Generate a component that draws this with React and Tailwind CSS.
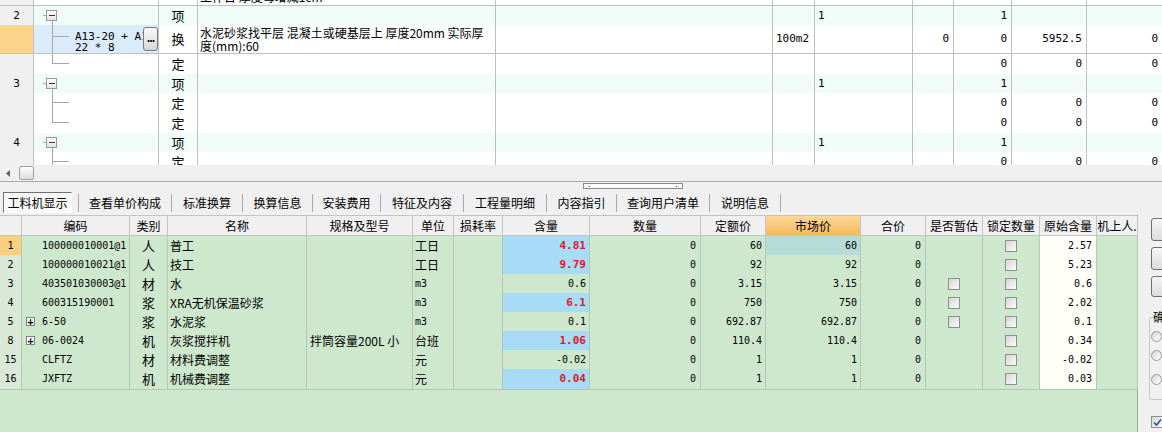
import React from 'react';

const TOP_COLS = 'grid grid-cols-[34px_125px_39px_298px_277px_42px_98px_41px_58px_75px_75px]';
const BOT_COLS = 'grid grid-cols-[22px_108px_38px_139px_106px_41px_49px_87px_111px_65px_95px_65px_57px_57px_57px_41px]';
const MONO = "font-['DejaVu_Sans_Mono',monospace]";

const topRows = [
  { h: 'h-[20px]', partial: true, desc: '工作日 厚度每增减1cm', vals: ['', '', '', '', '', ''] },
  { h: 'h-[19px]', num: '2', item: true, type: '项', tree: 'box', vals: ['', '1', '', '1', '', ''] },
  { h: 'h-[29px]', swap: true, type: '换', tree: 'mid', branch: 'top-[11px]', vals: ['100m2', '', '0', '0', '5952.5', '0'] },
  { h: 'h-[20px]', type: '定', tree: 'last', branch: 'top-[9px]', vals: ['', '', '', '0', '0', '0'] },
  { h: 'h-[19px]', num: '3', item: true, type: '项', tree: 'box', vals: ['', '1', '', '1', '', ''] },
  { h: 'h-[20px]', type: '定', tree: 'mid', branch: 'top-[9px]', vals: ['', '', '', '0', '0', '0'] },
  { h: 'h-[20px]', type: '定', tree: 'last', branch: 'top-[9px]', vals: ['', '', '', '0', '0', '0'] },
  { h: 'h-[19px]', num: '4', item: true, type: '项', tree: 'box', vals: ['', '1', '', '1', '', ''] },
  { h: 'h-[20px]', type: '定', tree: 'mid', branch: 'top-[9px]', vals: ['', '', '', '0', '0', '0'] },
];

const rows = [
  { n: '1', code: '100000010001@1', cat: '人', name: '普工', unit: '工日', qty: '4.81', hl: true, price: '60', orig: '2.57', sel: true },
  { n: '2', code: '100000010021@1', cat: '人', name: '技工', unit: '工日', qty: '9.79', hl: true, price: '92', orig: '5.23' },
  { n: '3', code: '403501030003@1', cat: '材', name: '水', unit: 'm3', qty: '0.6', price: '3.15', est: true, orig: '0.6' },
  { n: '4', code: '600315190001', cat: '浆', name: 'XRA无机保温砂浆', unit: 'm3', qty: '6.1', hl: true, price: '750', est: true, orig: '2.02' },
  { n: '5', code: '6-50', plus: true, cat: '浆', name: '水泥浆', unit: 'm3', qty: '0.1', price: '692.87', est: true, orig: '0.1' },
  { n: '8', code: '06-0024', plus: true, cat: '机', name: '灰浆搅拌机', spec: '拌筒容量200L 小', unit: '台班', qty: '1.06', hl: true, price: '110.4', orig: '0.34' },
  { n: '15', code: 'CLFTZ', cat: '材', name: '材料费调整', unit: '元', qty: '-0.02', price: '1', orig: '-0.02' },
  { n: '16', code: 'JXFTZ', cat: '机', name: '机械费调整', unit: '元', qty: '0.04', hl: true, price: '1', orig: '0.03' },
];

const tabs = [
  { t: '查看单价构成', w: 'w-[92px]' },
  { t: '标准换算', w: 'w-[70px]' },
  { t: '换算信息', w: 'w-[69px]' },
  { t: '安装费用', w: 'w-[67px]' },
  { t: '特征及内容', w: 'w-[82px]' },
  { t: '工程量明细', w: 'w-[82px]' },
  { t: '内容指引', w: 'w-[69px]' },
  { t: '查询用户清单', w: 'w-[92px]' },
  { t: '说明信息', w: 'w-[70px]' },
];

const headers = ['', '编码', '类别', '名称', '规格及型号', '单位', '损耗率', '含量', '数量', '定额价', '市场价', '合价', '是否暂估', '锁定数量', '原始含量', '机上人.'];

function CheckBox({ checked }) {
  return (
    <span className="flex items-center justify-center w-[12px] h-[12px] border border-[#8e8f8f] bg-linear-to-br from-[#d6d6d6] to-[#fbfbfb]">
      {checked && (
        <svg width="9" height="9" viewBox="0 0 9 9">
          <path d="M1 4.5 L3.5 7 L8 1.5" fill="none" stroke="#2a4fa8" strokeWidth="1.6" />
        </svg>
      )}
    </span>
  );
}

function TreeCell({ row }) {
  const bg = row.swap ? 'bg-[#dcebfc]' : row.item ? 'bg-[#effcf7]' : 'bg-white';
  return (
    <div className={`relative border-r border-b border-[#c0c0c0] ${bg}`}>
      {row.tree === 'box' && (
        <>
          <span className="absolute left-[9px] top-[9px] w-[3px] h-px bg-[#a8a8a8]" />
          <span className="absolute left-[12px] top-[4px] w-[11px] h-[11px] border border-[#9a9a9a] bg-linear-to-b from-white to-[#e4e4e4] flex items-center justify-center">
            <span className="w-[6px] h-px bg-[#333]" />
          </span>
          <span className="absolute left-[18px] top-[15px] bottom-0 w-px bg-[#a8a8a8]" />
        </>
      )}
      {row.tree === 'mid' && (
        <>
          <span className="absolute left-[18px] top-0 bottom-0 w-px bg-[#a8a8a8]" />
          <span className={`absolute left-[18px] w-[17px] h-px bg-[#a8a8a8] ${row.branch}`} />
        </>
      )}
      {row.tree === 'last' && (
        <>
          <span className="absolute left-[18px] top-0 h-[9px] w-px bg-[#a8a8a8]" />
          <span className={`absolute left-[18px] w-[17px] h-px bg-[#a8a8a8] ${row.branch}`} />
        </>
      )}
      {row.swap && (
        <>
          <div className={`${MONO} text-[11px] leading-[11px] pl-[41px] pr-[17px] pt-[6px] whitespace-nowrap overflow-hidden`}>
            <div>A13-20 + A13-</div>
            <div>22 * 8</div>
          </div>
          <div className="absolute left-[109px] top-[2px] w-[15px] h-[24px] rounded-[3px] border border-[#7a7a7a] bg-linear-to-b from-[#fafafa] to-[#d6d6d6] flex items-start justify-center">
            <span className="text-[11px] leading-[12px] font-bold tracking-[-1px] mt-[3px]">...</span>
          </div>
        </>
      )}
    </div>
  );
}

function TopRow({ row }) {
  const rowBg = row.item ? 'bg-[#effcf7]' : 'bg-white';
  const gutter = row.swap ? 'bg-[#fed48c]' : 'bg-[#f0f0f0]';
  return (
    <div className={`${TOP_COLS} ${row.h}`}>
      <div className={`border-r border-b border-[#c0c0c0] ${gutter} flex items-center justify-center ${MONO} text-[11px]`}>{row.num}</div>
      <TreeCell row={row} />
      <div className={`border-r border-b border-[#c0c0c0] ${rowBg} flex items-center justify-center text-[13px]`}>{row.type}</div>
      <div className={`border-r border-b border-[#c0c0c0] ${rowBg} pl-[2px] overflow-hidden leading-[13px] ${row.partial ? 'flex items-end pb-[2px]' : 'pt-[1px]'}`}>
        {row.partial && <span>{row.desc}</span>}
        {row.swap && (
          <>
            <div className="whitespace-nowrap">水泥砂浆找平层 混凝土或硬基层上 厚度20mm 实际厚</div>
            <div className="whitespace-nowrap">度(mm):60</div>
          </>
        )}
      </div>
      <div className={`border-r border-b border-[#c0c0c0] ${rowBg}`} />
      {row.vals.map((v, i) => (
        <div
          key={i}
          className={`border-r border-b border-[#c0c0c0] ${rowBg} flex items-center ${MONO} text-[11px] whitespace-nowrap ${i < 2 ? 'justify-start pl-[3px]' : 'justify-end pr-[4px]'} ${i === 5 ? 'border-r-0' : ''}`}
        >
          {v}
        </div>
      ))}
    </div>
  );
}

function BottomRow({ r }) {
  const cell = 'border-r border-b border-[#b3c5b3] flex items-center';
  return (
    <div className={`${BOT_COLS} h-[19px] bg-[#cde8cd]`}>
      <div className={`${cell} justify-center ${MONO} text-[10px] ${r.sel ? 'bg-[#fbcf82]' : 'bg-[#d9e8d7]'}`}>{r.n}</div>
      <div className={`${cell} ${MONO} text-[10px] whitespace-nowrap`}>
        {r.plus ? (
          <span className="ml-[4px] mr-[7px] w-[9px] h-[9px] border border-[#808080] bg-white flex items-center justify-center text-[10px] leading-[9px] font-bold">+</span>
        ) : (
          <span className="w-[20px]" />
        )}
        {r.code}
      </div>
      <div className={`${cell} justify-center text-[13px]`}>{r.cat}</div>
      <div className={`${cell} pl-[2px] whitespace-nowrap`}>{r.name}</div>
      <div className={`${cell} pl-[3px] whitespace-nowrap overflow-hidden`}>{r.spec}</div>
      <div className={`${cell} pl-[2px] ${/^[a-z0-9]+$/.test(r.unit) ? `${MONO} text-[10px]` : ''}`}>{r.unit}</div>
      <div className={cell} />
      <div className={`${cell} justify-end pr-[3px] ${MONO} ${r.hl ? 'bg-[#a8dbf6] text-[#dd1a22] font-bold text-[11px]' : 'text-[10px]'}`}>{r.qty}</div>
      <div className={`${cell} justify-end pr-[4px] ${MONO} text-[10px]`}>0</div>
      <div className={`${cell} justify-end pr-[3px] ${MONO} text-[10px]`}>{r.price}</div>
      <div className={`${cell} justify-end pr-[3px] ${MONO} text-[10px] ${r.sel ? 'bg-[#b6dcd8]' : ''}`}>{r.price}</div>
      <div className={`${cell} justify-end pr-[4px] ${MONO} text-[10px]`}>0</div>
      <div className={`${cell} justify-center`}>{r.est && <CheckBox />}</div>
      <div className={`${cell} justify-center`}><CheckBox /></div>
      <div className={`${cell} justify-end pr-[4px] bg-[#fffff8] ${MONO} text-[10px]`}>{r.orig}</div>
      <div className={cell} />
    </div>
  );
}

export default function App() {
  return (
    <div className="w-[1162px] h-[432px] overflow-hidden flex flex-col bg-[#f0f0f0] text-black text-[12px] font-['Noto_Sans_CJK_SC',sans-serif]">
      {/* upper grid */}
      <div className="h-[165px] overflow-hidden bg-white shrink-0">
        <div className="mt-[-14px]">
          {topRows.map((row, i) => (
            <TopRow key={i} row={row} />
          ))}
        </div>
      </div>

      {/* horizontal scrollbar */}
      <div className="h-[17px] shrink-0 flex items-center bg-[#f0f0f0] border-b border-[#a8a8a8]">
        <svg className="ml-[6px]" width="5" height="7" viewBox="0 0 5 7">
          <path d="M4 0 L0 3.5 L4 7 Z" fill="#606060" />
        </svg>
        <div className="ml-[8px] w-[15px] h-[14px] rounded-[2px] border border-[#a0a0a0] bg-linear-to-b from-[#fbfbfb] to-[#dedede]" />
      </div>

      {/* splitter */}
      <div className="h-[8px] shrink-0 flex items-center">
        <div className="ml-[583px] w-[100px] h-[6px] border border-[#8a8a8a] bg-[#fafafa] flex items-center justify-between px-[5px]">
          <span className="w-px h-px bg-[#555]" />
          <span className="w-px h-px bg-[#555]" />
        </div>
      </div>

      {/* tabs */}
      <div className="h-[25px] shrink-0 flex items-center">
        <div className="ml-[3px] w-[69px] h-[21px] border border-t-[#707070] border-l-[#707070] border-b-white border-r-white bg-[#fafafa] flex items-center justify-center">
          工料机显示
        </div>
        <span className="ml-[6px] w-px h-[18px] bg-[#a8a8a8]" />
        {tabs.map((t) => (
          <React.Fragment key={t.t}>
            <div className={`${t.w} flex items-center justify-center`}>{t.t}</div>
            <span className="w-px h-[18px] bg-[#a8a8a8]" />
          </React.Fragment>
        ))}
      </div>

      {/* lower grid + side panel */}
      <div className="flex-1 flex min-h-0">
        <div className="w-[1138px] flex flex-col bg-[#cde8cd] border-r border-[#a0a0a0]">
          <div className={`${BOT_COLS} h-[21px] bg-[#f0f0f0] border-t border-[#c4c4c4]`}>
            {headers.map((h, i) => (
              <div
                key={i}
                className={`border-r border-b border-[#c4c4c4] flex items-center justify-center whitespace-nowrap overflow-hidden ${i === 10 ? 'bg-linear-to-b from-[#fcd794] to-[#f5b85f]' : ''}`}
              >
                {h}
              </div>
            ))}
          </div>
          {rows.map((r) => (
            <BottomRow key={r.n} r={r} />
          ))}
        </div>

        <div className="flex-1 flex flex-col pl-[13px] pt-[3px] overflow-hidden">
          <div className="w-[20px] h-[23px] rounded-[3px] border border-[#707070] bg-linear-to-b from-[#f6f6f6] to-[#dcdcdc] shrink-0" />
          <div className="mt-[6px] w-[20px] h-[23px] rounded-[3px] border border-[#707070] bg-linear-to-b from-[#f6f6f6] to-[#dcdcdc] shrink-0" />
          <div className="mt-[6px] w-[20px] h-[21px] rounded-[3px] border border-[#707070] bg-linear-to-b from-[#f6f6f6] to-[#dcdcdc] shrink-0" />
          <div className="relative mt-[20px] ml-[-2px] w-[30px] h-[83px] border-t border-l border-b border-[#c8c8c8] rounded-l-[3px] flex flex-col pl-[1px] pt-[13px] gap-[8px] shrink-0">
            <span className="absolute left-[3px] top-[-8px] bg-[#f0f0f0] text-[12px] leading-[14px] whitespace-nowrap">确定</span>
            <span className="w-[11px] h-[11px] rounded-full border border-[#9a9a9a] bg-linear-to-br from-[#d4d4d4] to-white" />
            <span className="w-[11px] h-[11px] rounded-full border border-[#9a9a9a] bg-linear-to-br from-[#d4d4d4] to-white" />
            <span className="mt-[5px] w-[11px] h-[11px] rounded-full border border-[#9a9a9a] bg-linear-to-br from-[#d4d4d4] to-white" />
          </div>
          <div className="mt-[16px]">
            <CheckBox checked />
          </div>
        </div>
      </div>
    </div>
  );
}
